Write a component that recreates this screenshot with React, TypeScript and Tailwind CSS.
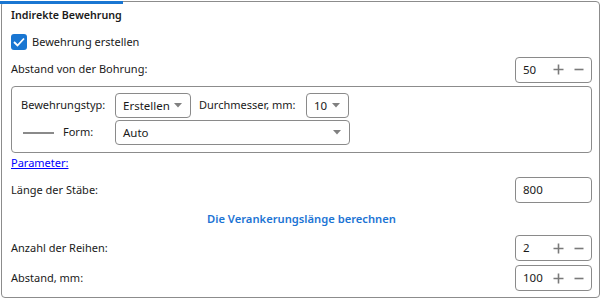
import React from "react";

const font = { fontFamily: '"Noto Sans", "Segoe UI", sans-serif' };

function Caret() {
  return (
    <svg width="8" height="5" viewBox="0 0 8 5" className="shrink-0">
      <path d="M0 0 L8 0 L4 4.5 Z" fill="#808080" />
    </svg>
  );
}

function Spinner({ value }: { value: string }) {
  return (
    <div className="flex items-center w-[77px] h-[26px] border border-[#8a8a8a] rounded-[4px] pl-[7px] pr-[7px]">
      <span className="flex-1 text-[11.5px] text-[#1a1a1a]">{value}</span>
      <svg width="11" height="11" viewBox="0 0 11 11" className="mr-[10px]">
        <path d="M5.5 0.5 V10.5 M0.5 5.5 H10.5" stroke="#7a7a7a" strokeWidth="1.6" />
      </svg>
      <svg width="10" height="11" viewBox="0 0 10 11">
        <path d="M0.5 5.5 H9.5" stroke="#7a7a7a" strokeWidth="1.6" />
      </svg>
    </div>
  );
}

function Select({ value, width }: { value: string; width: string }) {
  return (
    <div className={`flex items-center h-[25px] border border-[#8a8a8a] rounded-[4px] pl-[7px] pr-[8px] shrink-0 ${width}`}>
      <span className="flex-1 text-[11.5px] text-[#1a1a1a]">{value}</span>
      <Caret />
    </div>
  );
}

export default function App() {
  return (
    <div className="w-[602px] h-[299px] bg-white relative text-[#1a1a1a]" style={font}>
      <div className="absolute left-0 top-0 w-[123px] h-[3px] bg-[#1976d2]" />
      <div className="ml-[1px] mt-[1px] w-[599px] h-[297px] border border-[#8c8c8c] rounded-[4px] pl-[9px] pr-[7px] flex flex-col text-[11px] whitespace-nowrap">
        <div className="h-[26px] flex items-center font-semibold pt-[1px] text-[10.7px]">Indirekte Bewehrung</div>
        <div className="h-[28px] flex items-center gap-[5px]">
          <div className="w-[16px] h-[16px] rounded-[3px] bg-[#1976d2] flex items-center justify-center">
            <svg width="12" height="10" viewBox="0 0 12 10">
              <path d="M1 5 L4.5 8.5 L11 1.5" stroke="white" strokeWidth="1.8" fill="none" />
            </svg>
          </div>
          <span>Bewehrung erstellen</span>
        </div>
        <div className="h-[27px] flex items-center justify-between">
          <span>Abstand von der Bohrung:</span>
          <Spinner value="50" />
        </div>
        <div className="mt-[3px] h-[67px] border border-[#8c8c8c] rounded-[4px] pl-[9px] pt-[6px] flex flex-col gap-[2px]">
          <div className="flex items-center h-[25px]">
            <span className="w-[94px] shrink-0">Bewehrungstyp:</span>
            <Select value="Erstellen" width="w-[76px]" />
            <span className="ml-[8px] w-[107px] shrink-0">Durchmesser, mm:</span>
            <Select value="10" width="w-[43px]" />
          </div>
          <div className="flex items-center h-[25px]">
            <span className="w-[94px] shrink-0 flex items-center">
              <span className="ml-[2px] w-[31px] h-[2px] bg-[#8a8a8a]" />
              <span className="ml-[9px]">Form:</span>
            </span>
            <Select value="Auto" width="w-[235px]" />
          </div>
        </div>
        <div className="h-[21px] flex items-center">
          <a className="text-[#0000ff] underline">Parameter:</a>
        </div>
        <div className="mt-[3px] h-[26px] flex items-center justify-between">
          <span>Länge der Stäbe:</span>
          <div className="flex items-center w-[77px] h-[26px] border border-[#8a8a8a] rounded-[4px] pl-[7px] text-[11.5px]">800</div>
        </div>
        <div className="h-[32px] flex items-center justify-center font-semibold text-[11.2px] text-[#1c74d4]">
          Die Verankerungslänge berechnen
        </div>
        <div className="h-[26px] flex items-center justify-between">
          <span>Anzahl der Reihen:</span>
          <Spinner value="2" />
        </div>
        <div className="mt-[4px] h-[26px] flex items-center justify-between">
          <span>Abstand, mm:</span>
          <Spinner value="100" />
        </div>
      </div>
    </div>
  );
}
